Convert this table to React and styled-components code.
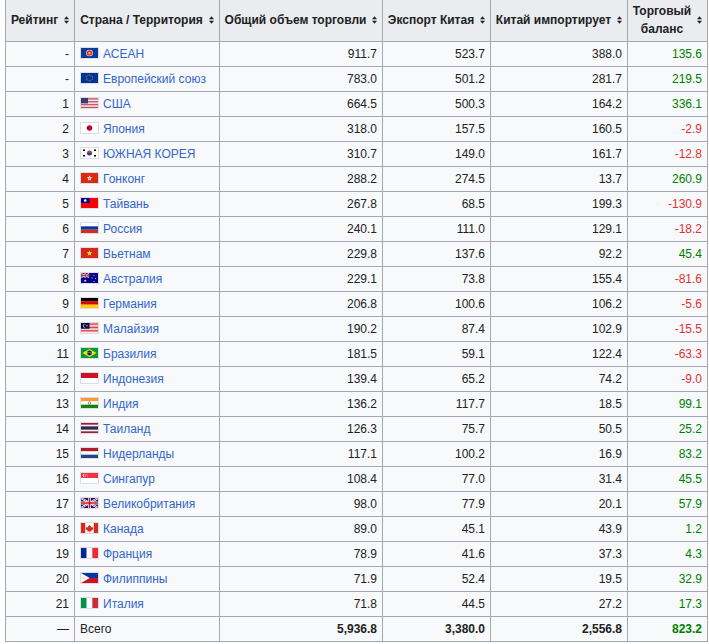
import React from "react";
import styled, { createGlobalStyle } from "styled-components";

const rows = [
  ["-", "ASEAN", "АСЕАН", "911.7", "523.7", "388.0", "135.6"],
  ["-", "EU", "Европейский союз", "783.0", "501.2", "281.7", "219.5"],
  ["1", "US", "США", "664.5", "500.3", "164.2", "336.1"],
  ["2", "JP", "Япония", "318.0", "157.5", "160.5", "-2.9"],
  ["3", "KR", "ЮЖНАЯ КОРЕЯ", "310.7", "149.0", "161.7", "-12.8"],
  ["4", "HK", "Гонконг", "288.2", "274.5", "13.7", "260.9"],
  ["5", "TW", "Тайвань", "267.8", "68.5", "199.3", "-130.9"],
  ["6", "RU", "Россия", "240.1", "111.0", "129.1", "-18.2"],
  ["7", "VN", "Вьетнам", "229.8", "137.6", "92.2", "45.4"],
  ["8", "AU", "Австралия", "229.1", "73.8", "155.4", "-81.6"],
  ["9", "DE", "Германия", "206.8", "100.6", "106.2", "-5.6"],
  ["10", "MY", "Малайзия", "190.2", "87.4", "102.9", "-15.5"],
  ["11", "BR", "Бразилия", "181.5", "59.1", "122.4", "-63.3"],
  ["12", "ID", "Индонезия", "139.4", "65.2", "74.2", "-9.0"],
  ["13", "IN", "Индия", "136.2", "117.7", "18.5", "99.1"],
  ["14", "TH", "Таиланд", "126.3", "75.7", "50.5", "25.2"],
  ["15", "NL", "Нидерланды", "117.1", "100.2", "16.9", "83.2"],
  ["16", "SG", "Сингапур", "108.4", "77.0", "31.4", "45.5"],
  ["17", "GB", "Великобритания", "98.0", "77.9", "20.1", "57.9"],
  ["18", "CA", "Канада", "89.0", "45.1", "43.9", "1.2"],
  ["19", "FR", "Франция", "78.9", "41.6", "37.3", "4.3"],
  ["20", "PH", "Филиппины", "71.9", "52.4", "19.5", "32.9"],
  ["21", "IT", "Италия", "71.8", "44.5", "27.2", "17.3"],
];

// union jack used for UK and in the Australian canton
const UnionJack = ({ w = 34, h = 20 }) => (
  <g>
    <rect width={w} height={h} fill="#012169" />
    <path d={`M0 0L${w} ${h}M${w} 0L0 ${h}`} stroke="#fff" strokeWidth={h / 5} />
    <path d={`M0 0L${w} ${h}M${w} 0L0 ${h}`} stroke="#c8102e" strokeWidth={h / 14} />
    <path d={`M${w / 2} 0V${h}M0 ${h / 2}H${w}`} stroke="#fff" strokeWidth={h / 3.3} />
    <path d={`M${w / 2} 0V${h}M0 ${h / 2}H${w}`} stroke="#c8102e" strokeWidth={h / 6} />
  </g>
);

const stripes = (n, a, b, total = 20, width = 34) =>
  Array.from({ length: n }, (_, i) => (
    <rect key={i} y={(i * total) / n} width={width} height={total / n + 0.05} fill={i % 2 ? b : a} />
  ));

const star = (cx, cy, r, fill) => {
  const pts = [];
  for (let i = 0; i < 10; i++) {
    const rr = i % 2 ? r * 0.4 : r;
    const a = -Math.PI / 2 + (i * Math.PI) / 5;
    pts.push(`${(cx + rr * Math.cos(a)).toFixed(2)},${(cy + rr * Math.sin(a)).toFixed(2)}`);
  }
  return <polygon points={pts.join(" ")} fill={fill} />;
};

const flags = {
  ASEAN: (
    <>
      <rect width="34" height="20" fill="#0a3a9a" />
      <circle cx="17" cy="10" r="6.5" fill="#fff" />
      <circle cx="17" cy="10" r="5.3" fill="#e0202a" />
      <circle cx="17" cy="10" r="2.4" fill="#f7d117" />
    </>
  ),
  EU: (
    <>
      <rect width="34" height="20" fill="#003399" />
      {Array.from({ length: 12 }, (_, i) => {
        const a = (i * Math.PI) / 6;
        return <circle key={i} cx={17 + 6 * Math.cos(a)} cy={10 + 6 * Math.sin(a)} r="0.9" fill="#fc0" />;
      })}
    </>
  ),
  US: (
    <>
      {stripes(13, "#b22234", "#fff")}
      <rect width="14" height="10.8" fill="#3c3b6e" />
    </>
  ),
  JP: (
    <>
      <rect width="34" height="20" fill="#fff" />
      <circle cx="17" cy="10" r="5.5" fill="#bc002d" />
    </>
  ),
  KR: (
    <>
      <rect width="34" height="20" fill="#fff" />
      <path d="M12 10a5 5 0 0 1 10 0z" fill="#cd2e3a" />
      <path d="M12 10a5 5 0 0 0 10 0z" fill="#0047a0" />
      <rect x="4" y="3" width="4" height="3" fill="#000" />
      <rect x="26" y="3" width="4" height="3" fill="#000" />
      <rect x="4" y="14" width="4" height="3" fill="#000" />
      <rect x="26" y="14" width="4" height="3" fill="#000" />
    </>
  ),
  HK: (
    <>
      <rect width="34" height="20" fill="#de2910" />
      {star(17, 10.5, 6, "#fff")}
      <circle cx="17" cy="10.5" r="1.2" fill="#de2910" />
    </>
  ),
  TW: (
    <>
      <rect width="34" height="20" fill="#fe0000" />
      <rect width="17" height="10" fill="#000095" />
      {star(8.5, 5, 4, "#fff")}
      <circle cx="8.5" cy="5" r="2" fill="#fff" />
    </>
  ),
  RU: (
    <>
      <rect width="34" height="7" fill="#fff" />
      <rect y="6.67" width="34" height="6.7" fill="#0039a6" />
      <rect y="13.33" width="34" height="6.7" fill="#d52b1e" />
    </>
  ),
  VN: (
    <>
      <rect width="34" height="20" fill="#da251d" />
      {star(17, 10.5, 6, "#ff0")}
    </>
  ),
  AU: (
    <>
      <rect width="34" height="20" fill="#00008b" />
      <svg width="17" height="10" viewBox="0 0 34 20" preserveAspectRatio="none">
        <UnionJack />
      </svg>
      {star(8.5, 15.5, 3, "#fff")}
      {star(26, 5, 1.8, "#fff")}
      {star(22, 10, 1.8, "#fff")}
      {star(29, 11, 1.8, "#fff")}
      {star(26, 17, 1.8, "#fff")}
    </>
  ),
  DE: (
    <>
      <rect width="34" height="7" fill="#000" />
      <rect y="6.67" width="34" height="6.7" fill="#dd0000" />
      <rect y="13.33" width="34" height="6.7" fill="#ffce00" />
    </>
  ),
  MY: (
    <>
      {stripes(14, "#cc0001", "#fff")}
      <rect width="17" height="11.4" fill="#010066" />
      <circle cx="7" cy="5.7" r="3.6" fill="#fc0" />
      <circle cx="8.3" cy="5.7" r="3" fill="#010066" />
      {star(12, 5.7, 2.4, "#fc0")}
    </>
  ),
  BR: (
    <>
      <rect width="34" height="20" fill="#009c3b" />
      <polygon points="3,10 17,2 31,10 17,18" fill="#ffdf00" />
      <circle cx="17" cy="10" r="4.8" fill="#002776" />
      <path d="M12.4 9.2q4.6-1 9.2 1.6" stroke="#fff" strokeWidth="0.8" fill="none" />
    </>
  ),
  ID: (
    <>
      <rect width="34" height="10" fill="#ce1126" />
      <rect y="10" width="34" height="10" fill="#fff" />
    </>
  ),
  IN: (
    <>
      <rect width="34" height="7" fill="#ff9933" />
      <rect y="6.67" width="34" height="6.7" fill="#fff" />
      <rect y="13.33" width="34" height="6.7" fill="#138808" />
      <circle cx="17" cy="10" r="2.6" fill="none" stroke="#000080" strokeWidth="0.8" />
    </>
  ),
  TH: (
    <>
      <rect width="34" height="20" fill="#a51931" />
      <rect y="3.33" width="34" height="13.34" fill="#f4f5f8" />
      <rect y="6.67" width="34" height="6.66" fill="#2d2a4a" />
    </>
  ),
  NL: (
    <>
      <rect width="34" height="7" fill="#ae1c28" />
      <rect y="6.67" width="34" height="6.7" fill="#fff" />
      <rect y="13.33" width="34" height="6.7" fill="#21468b" />
    </>
  ),
  SG: (
    <>
      <rect width="34" height="10" fill="#ef3340" />
      <rect y="10" width="34" height="10" fill="#fff" />
      <circle cx="7" cy="5" r="3.4" fill="#fff" />
      <circle cx="8.5" cy="5" r="3.2" fill="#ef3340" />
      {[0, 1, 2, 3, 4].map((i) => (
        <circle key={i} cx={11 + 2.4 * Math.cos(-Math.PI / 2 + (i * 2 * Math.PI) / 5)} cy={5 + 2.4 * Math.sin(-Math.PI / 2 + (i * 2 * Math.PI) / 5)} r="0.7" fill="#fff" />
      ))}
    </>
  ),
  GB: <UnionJack />,
  CA: (
    <>
      <rect width="34" height="20" fill="#fff" />
      <rect width="8.5" height="20" fill="#d52b1e" />
      <rect x="25.5" width="8.5" height="20" fill="#d52b1e" />
      <polygon
        points="17,3.5 18.4,6.5 20.2,5.6 19.6,9.4 22.2,7.6 22.8,9.2 24.6,8.8 23.8,11.6 24.8,12.2 20.6,15.6 21,17 17.5,16.4 17.5,19 16.5,19 16.5,16.4 13,17 13.4,15.6 9.2,12.2 10.2,11.6 9.4,8.8 11.2,9.2 11.8,7.6 14.4,9.4 13.8,5.6 15.6,6.5"
        fill="#d52b1e"
      />
    </>
  ),
  FR: (
    <>
      <rect width="11.4" height="20" fill="#002395" />
      <rect x="11.33" width="11.4" height="20" fill="#fff" />
      <rect x="22.67" width="11.4" height="20" fill="#ed2939" />
    </>
  ),
  PH: (
    <>
      <rect width="34" height="10" fill="#0038a8" />
      <rect y="10" width="34" height="10" fill="#ce1126" />
      <polygon points="0,0 17.3,10 0,20" fill="#fff" />
      <circle cx="5.5" cy="10" r="2" fill="#fcd116" />
    </>
  ),
  IT: (
    <>
      <rect width="11.4" height="20" fill="#009246" />
      <rect x="11.33" width="11.4" height="20" fill="#fff" />
      <rect x="22.67" width="11.4" height="20" fill="#ce2b37" />
    </>
  ),
};

const SortIcon = () => (
  <SortSvg viewBox="0 0 5 8" width="5" height="8">
    <polygon points="0,3.3 2.5,0.3 5,3.3" fill="#202122" />
    <polygon points="0,4.7 5,4.7 2.5,7.7" fill="#202122" />
  </SortSvg>
);

const headers = [
  ["Рейтинг"],
  ["Страна / Территория"],
  ["Общий объем торговли"],
  ["Экспорт Китая"],
  ["Китай импортирует"],
  ["Торговый", "баланс"],
];

const colWidths = [69, 145, 163, 108, 137, 80];

const balanceColor = (v) => (v.startsWith("-") ? "#dd3333" : "#008000");

const App = () => {
  return (
    <>
      <GlobalStyle />
      <Table>
        <colgroup>
          {colWidths.map((w, i) => (
            <col key={i} style={{ width: w }} />
          ))}
        </colgroup>
        <thead>
          <tr>
            {headers.map((h, i) => (
              <HeadCell key={i}>
                <HeadInner>
                  <HeadText>
                    {h.map((line, j) => (
                      <span key={j}>
                        {j > 0 && <br />}
                        {line}
                      </span>
                    ))}
                  </HeadText>
                  <SortIcon />
                </HeadInner>
              </HeadCell>
            ))}
          </tr>
        </thead>
        <tbody>
          {rows.map(([rank, code, name, total, exp, imp, bal]) => (
            <tr key={name}>
              <Cell $align="right">{rank}</Cell>
              <Cell>
                <Flag viewBox="0 0 34 20" preserveAspectRatio="none">
                  {flags[code]}
                </Flag>
                <CountryLink href="#">{name}</CountryLink>
              </Cell>
              <Cell $align="right">{total}</Cell>
              <Cell $align="right">{exp}</Cell>
              <Cell $align="right">{imp}</Cell>
              <Cell $align="right" $color={balanceColor(bal)}>
                {bal}
              </Cell>
            </tr>
          ))}
          <tr>
            <Cell $align="right">—</Cell>
            <Cell>Всего</Cell>
            <Cell $align="right" $bold>5,936.8</Cell>
            <Cell $align="right" $bold>3,380.0</Cell>
            <Cell $align="right" $bold>2,556.8</Cell>
            <Cell $align="right" $bold $color="#008000">823.2</Cell>
          </tr>
        </tbody>
      </Table>
    </>
  );
};

export default App;

const GlobalStyle = createGlobalStyle`
  body {
    margin: 0;
    background: #ffffff;
    font-family: "Liberation Sans", Arial, sans-serif;
    color: #202122;
  }
`;

const Table = styled.table`
  margin: -2px 0 0 5px;
  width: 703px;
  table-layout: fixed;
  border-collapse: collapse;
  background: #f8f9fa;
  border: 1px solid #a2a9b1;
  font-size: 12px;
  line-height: 18px;
  color: #202122;
`;

const HeadCell = styled.th`
  background: #eaecf0;
  border: 1px solid #a2a9b1;
  padding: 3px 5px;
  font-weight: bold;
  vertical-align: middle;
`;

const HeadInner = styled.div`
  display: flex;
  align-items: center;
  justify-content: center;
  gap: 6px;
  white-space: nowrap;
`;

const HeadText = styled.span`
  text-align: center;
`;

const SortSvg = styled.svg`
  flex: none;
  display: block;
`;

const Cell = styled.td`
  border: 1px solid #a2a9b1;
  padding: 3px 5px;
  text-align: ${(p) => p.$align || "left"};
  font-weight: ${(p) => (p.$bold ? "bold" : "normal")};
  color: ${(p) => p.$color || "#202122"};
  white-space: nowrap;
`;

const Flag = styled.svg`
  width: 17px;
  height: 10px;
  border: 1px solid #dadde3;
  vertical-align: -1px;
  margin-right: 4px;
`;

const CountryLink = styled.a`
  color: #3366cc;
  text-decoration: none;
`;
